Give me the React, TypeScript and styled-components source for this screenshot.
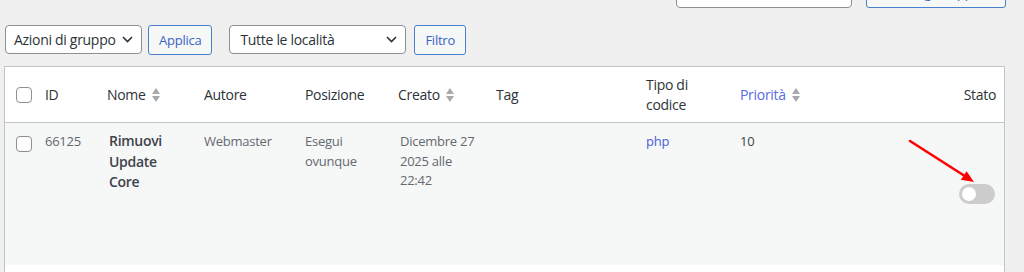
import styled, { createGlobalStyle } from "styled-components";

const GlobalStyle = createGlobalStyle`
	html, body {
		margin: 0;
		padding: 0;
		background: #f0f0f1;
		font-family: "Open Sans", "Noto Sans", sans-serif;
		color: #2c3338;
		letter-spacing: -0.3px;
		overflow: hidden;
	}
`;

type Column = {
	key: string;
	label: string;
	width: number;
	sortable?: boolean;
	active?: boolean;
	align?: "left" | "right";
};

const columns: Column[] = [
	{ key: "id", label: "ID", width: 62 },
	{ key: "name", label: "Nome", width: 97, sortable: true },
	{ key: "author", label: "Autore", width: 101 },
	{ key: "location", label: "Posizione", width: 93 },
	{ key: "created", label: "Creato", width: 98, sortable: true },
	{ key: "tags", label: "Tag", width: 150 },
	{ key: "type", label: "Tipo di codice", width: 94 },
	{ key: "priority", label: "Priorità", width: 110, sortable: true, active: true },
	{ key: "status", label: "Stato", width: 164, align: "right" },
];

const Chevron = () => (
	<svg width="11" height="7" viewBox="0 0 11 7" fill="none">
		<path d="M1 1l4.5 4.5L10 1" stroke="#2c3338" strokeWidth="1.6" />
	</svg>
);

const SortArrows = () => (
	<svg width="8" height="14" viewBox="0 0 8 14">
		<path d="M4 0L8 6H0z" fill="#a7aaad" />
		<path d="M4 14L8 8H0z" fill="#a7aaad" />
	</svg>
);

const PointerArrow = () => (
	<svg width="72" height="48" viewBox="0 0 72 48">
		<line x1="5" y1="4" x2="59" y2="38.5" stroke="#f00" strokeWidth="2.6" strokeLinecap="round" />
		<path d="M69 45L55.8 42.8L61.6 34.2z" fill="#f00" />
	</svg>
);

function App() {
	return (
		<Page>
			<GlobalStyle />
			<TopBar>
				<SearchInput />
				<GhostButton $width={140}>Cerca gli snippet</GhostButton>
			</TopBar>

			<Toolbar>
				<SelectBox $width={137}>
					<span>Azioni di gruppo</span>
					<Chevron />
				</SelectBox>
				<GhostButton>Applica</GhostButton>
				<Spacer />
				<SelectBox $width={177} $padLeft={10}>
					<span>Tutte le località</span>
					<Chevron />
				</SelectBox>
				<GhostButton $gapBefore={2}>Filtro</GhostButton>
			</Toolbar>

			<Table>
				<colgroup>
					<col style={{ width: 30 }} />
					{columns.map((c) => (
						<col key={c.key} style={{ width: c.width }} />
					))}
				</colgroup>
				<thead>
					<tr>
						<CheckHead>
							<Checkbox />
						</CheckHead>
						{columns.map((c) => (
							<HeadCell key={c.key} $align={c.align}>
								{c.sortable ? (
									<SortLabel $active={c.active}>
										{c.label}
										<SortArrows />
									</SortLabel>
								) : (
									c.label
								)}
							</HeadCell>
						))}
					</tr>
				</thead>
				<tbody>
					<Row>
						<CheckCell>
							<Checkbox />
						</CheckCell>
						<Cell>66125</Cell>
						<Cell $indent>
							<Title>Rimuovi Update Core</Title>
						</Cell>
						<Cell>Webmaster</Cell>
						<Cell>Esegui ovunque</Cell>
						<Cell $indent>Dicembre 27 2025 alle 22:42</Cell>
						<Cell />
						<Cell>
							<Link>php</Link>
						</Cell>
						<Cell $dark>10</Cell>
						<StatusCell>
							<ArrowOverlay>
								<PointerArrow />
							</ArrowOverlay>
							<Toggle />
						</StatusCell>
					</Row>
					<EmptyRow>
						<td colSpan={10} />
					</EmptyRow>
				</tbody>
			</Table>
		</Page>
	);
}

// Styled Components
const Page = styled.div`
	width: 1024px;
	height: 272px;
	padding: 0 18px 0 4px;
	box-sizing: border-box;
	overflow: hidden;
`;

const TopBar = styled.div`
	display: flex;
	justify-content: flex-end;
	gap: 14px;
	margin-top: -22px;
	height: 30px;
`;

const SearchInput = styled.div`
	width: 176px;
	height: 30px;
	box-sizing: border-box;
	background: #fff;
	border: 1px solid #8c8f94;
	border-radius: 4px;
`;

const GhostButton = styled.button<{ $width?: number; $gapBefore?: number }>`
	${(p) => (p.$width ? `width: ${p.$width}px;` : "")}
	margin-left: ${(p) => p.$gapBefore ?? 0}px;
	height: 30px;
	box-sizing: border-box;
	padding: 0 10px;
	background: #f6f7f7;
	border: 1px solid #4a7fd0;
	border-radius: 3px;
	color: #3b63c6;
	font-family: inherit;
	font-size: 13px;
	letter-spacing: -0.25px;
	line-height: 28px;
	white-space: nowrap;
`;

const Toolbar = styled.div`
	display: flex;
	align-items: center;
	gap: 6px;
	margin: 17px 0 0 1px;
	height: 29px;
`;

const Spacer = styled.div`
	width: 5px;
`;

const SelectBox = styled.div<{ $width: number; $padLeft?: number }>`
	width: ${(p) => p.$width}px;
	height: 29px;
	box-sizing: border-box;
	display: flex;
	align-items: center;
	justify-content: space-between;
	padding: 0 8px 0 ${(p) => p.$padLeft ?? 8}px;
	background: #fff;
	border: 1px solid #8c8f94;
	border-radius: 4px;
	font-size: 14px;
	color: #2c3338;
	white-space: nowrap;
`;

const Table = styled.table`
	width: 1001px;
	margin-top: 12px;
	table-layout: fixed;
	border-collapse: separate;
	border-spacing: 0;
	background: #fff;
	border: 1px solid #c3c4c7;
`;

const HeadCell = styled.th<{ $align?: "left" | "right" }>`
	height: 39px;
	padding: ${(p) => (p.$align === "right" ? "8px 8px 8px 10px" : "8px 10px")};
	border-bottom: 1px solid #c3c4c7;
	text-align: ${(p) => p.$align ?? "left"};
	vertical-align: middle;
	font-size: 14px;
	font-weight: 400;
	line-height: 1.4;
	color: #2c3338;
`;

const CheckHead = styled.th`
	padding: 0 0 0 11px;
	border-bottom: 1px solid #c3c4c7;
	vertical-align: middle;
	text-align: left;
`;

const SortLabel = styled.span<{ $active?: boolean }>`
	display: inline-flex;
	align-items: center;
	gap: 6px;
	color: ${(p) => (p.$active ? "#5a6be3" : "#2c3338")};
`;

const Checkbox = styled.span`
	display: block;
	width: 16px;
	height: 16px;
	box-sizing: border-box;
	border: 1px solid #8c8f94;
	border-radius: 4px;
	background: #fff;
`;

const Row = styled.tr`
	height: 142px;
	background: #f6f7f7;
`;

const Cell = styled.td<{ $dark?: boolean; $indent?: boolean }>`
	padding: 9px 10px 9px ${(p) => (p.$indent ? 12 : 10)}px;
	vertical-align: top;
	font-size: 13px;
	letter-spacing: -0.25px;
	line-height: 1.5;
	color: ${(p) => (p.$dark ? "#3c434a" : "#646970")};
`;

const CheckCell = styled.td`
	padding: 13px 0 0 11px;
	vertical-align: top;
`;

const Title = styled.strong`
	display: block;
	font-size: 14px;
	font-weight: 600;
	letter-spacing: -0.3px;
	line-height: 20.5px;
	color: #3c434a;
	margin-top: -1px;
`;

const Link = styled.span`
	color: #4a5fd6;
`;

const StatusCell = styled.td`
	position: relative;
	padding: 61px 9px 0 0;
	vertical-align: top;
	text-align: right;
`;

const ArrowOverlay = styled.div`
	position: absolute;
	left: 65px;
	top: 14px;
	line-height: 0;
`;

const Toggle = styled.span`
	display: inline-block;
	position: relative;
	width: 36px;
	height: 20px;
	border-radius: 10px;
	background: #cccccc;
	vertical-align: top;
	&::after {
		content: "";
		position: absolute;
		left: 3px;
		top: 3px;
		width: 14px;
		height: 14px;
		border-radius: 50%;
		background: #fff;
	}
`;

const EmptyRow = styled.tr`
	height: 20px;
	background: #fff;
`;

export default App;
